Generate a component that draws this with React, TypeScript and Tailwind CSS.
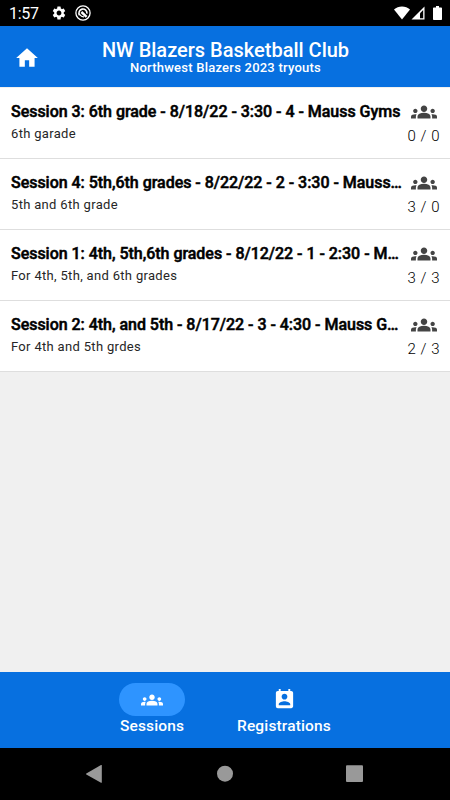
import { MdGroups, MdHome, MdPermContactCalendar, MdSettings } from 'react-icons/md';

type Session = {
  title: string;
  note: string;
  count: string;
};

const sessions: Session[] = [
  { title: 'Session 3: 6th grade - 8/18/22 - 3:30 - 4 - Mauss Gyms', note: '6th garade', count: '0 / 0' },
  { title: 'Session 4: 5th,6th grades - 8/22/22 - 2 - 3:30 - Mauss Gyms', note: '5th and 6th grade', count: '3 / 0' },
  { title: 'Session 1: 4th, 5th,6th grades - 8/12/22 - 1 - 2:30 - Mauss Gyms', note: 'For 4th, 5th, and 6th grades', count: '3 / 3' },
  { title: 'Session 2: 4th, and 5th - 8/17/22 - 3 - 4:30 - Mauss Gyms', note: 'For 4th and 5th grdes', count: '2 / 3' },
];

function StatusBar() {
  return (
    <div className="flex h-[26px] shrink-0 items-center bg-black pl-[9px] pr-[8px] text-white">
      <span className="pt-[1px] text-[16px] leading-[25px] tracking-[-0.3px]">1:57</span>
      <MdSettings className="ml-[12px] h-[16px] w-[16px]" />
      <svg className="ml-[8px] h-[16px] w-[16px]" viewBox="0 0 16 16" fill="none" stroke="currentColor">
        <circle cx="8" cy="8" r="7.1" strokeWidth="1.3" />
        <path d="M4.6 10.2A4 4 0 1 1 11.9 8.6" strokeWidth="1.6" />
        <path d="M6.4 7 11.6 11.8" strokeWidth="2.4" />
        <path d="M4.8 9.6q1.6 2.4 4.2 2.2" strokeWidth="1.2" />
      </svg>
      <div className="ml-auto flex items-center">
        <svg className="h-[14px] w-[16px]" viewBox="0 0 16 14" fill="currentColor">
          <path d="M8 13.6 0 3.6C2.2 1.6 5 .5 8 .5s5.8 1.1 8 3.1z" />
        </svg>
        <svg className="ml-[1px] h-[14px] w-[14px]" viewBox="0 0 14 14">
          <path d="M13.5.5v13H.5z" fill="currentColor" />
          <path d="M12.2 4v8.2H9V7.2z" fill="#000" />
        </svg>
        <svg className="ml-[8px] h-[14px] w-[9px]" viewBox="0 0 9 14" fill="currentColor">
          <path d="M3 0h3v1.5h2.2q.8 0 .8.8v10.9q0 .8-.8.8H.8q-.8 0-.8-.8V2.3q0-.8.8-.8H3z" />
        </svg>
      </div>
    </div>
  );
}

function Header() {
  return (
    <header className="grid h-[61px] shrink-0 grid-cols-[60px_1fr_60px] items-center bg-[#0770e0] text-white">
      <button className="pl-[14px] pt-[3px]" aria-label="Home">
        <MdHome className="h-[26px] w-[26px]" />
      </button>
      <div className="flex flex-col items-center pl-[1px] whitespace-nowrap">
        <h1 className="text-[20px] leading-[22px] font-medium">NW Blazers Basketball Club</h1>
        <p className="text-[13px] leading-[14px] font-medium tracking-[0.23px]">Northwest Blazers 2023 tryouts</p>
      </div>
    </header>
  );
}

function SessionRow({ session }: { session: Session }) {
  return (
    <li className="flex h-[71px] items-start border-b border-[#dedede] bg-white pl-[11px] pr-[10px] text-black">
      <div className="min-w-0 flex-1 pt-[14px]">
        <h2 className="truncate text-[16px] leading-[20px] font-medium tracking-[-0.03px] [-webkit-text-stroke:0.5px_black]">
          {session.title}
        </h2>
        <p className="mt-[4px] text-[13px] leading-[16px] tracking-[0.32px] text-[#262626]">{session.note}</p>
      </div>
      <div className="flex w-[37px] flex-col items-end pt-[11px]">
        <MdGroups className="mr-[3px] h-[26px] w-[26px] text-[#444]" />
        <span className="mt-[1px] text-[15px] leading-[20px] font-light tracking-[0.5px] whitespace-nowrap">{session.count}</span>
      </div>
    </li>
  );
}

function BottomNav() {
  return (
    <nav className="flex h-[76px] shrink-0 justify-center gap-[51px] bg-[#0770e0] pt-[11px] pl-[1px] text-[15.5px] font-medium text-white">
      <button className="flex w-[66px] flex-col items-center">
        <span className="flex h-[33px] w-[66px] items-center justify-center rounded-full bg-[#2e94ff]">
          <MdGroups className="h-[22px] w-[22px]" />
        </span>
        <span className="leading-[20px] tracking-[0.15px]">Sessions</span>
      </button>
      <button className="flex w-[96px] flex-col items-center">
        <span className="flex h-[33px] items-center justify-center">
          <MdPermContactCalendar className="h-[23px] w-[23px]" />
        </span>
        <span className="leading-[20px] tracking-[0.15px]">Registrations</span>
      </button>
    </nav>
  );
}

function SystemNav() {
  return (
    <div className="h-[52px] shrink-0 bg-black">
      <svg className="h-[52px] w-[450px]" viewBox="0 0 450 52" fill="#999">
        <path d="M86.3 25.4 101 17.1q.8-.4.8.5v16.6q0 .9-.8.5L86.3 26.4q-.7-.5 0-1z" />
        <circle cx="225" cy="25.7" r="8" />
        <rect x="346" y="17.2" width="17" height="16.8" rx="1" />
      </svg>
    </div>
  );
}

export default function App() {
  return (
    <div className="flex h-[800px] w-[450px] flex-col overflow-hidden bg-[#f0f0f0] font-['Roboto',sans-serif]">
      <StatusBar />
      <Header />
      <ul className="flex-1 pt-[1px]">
        {sessions.map((session) => (
          <SessionRow key={session.title} session={session} />
        ))}
      </ul>
      <BottomNav />
      <SystemNav />
    </div>
  );
}
